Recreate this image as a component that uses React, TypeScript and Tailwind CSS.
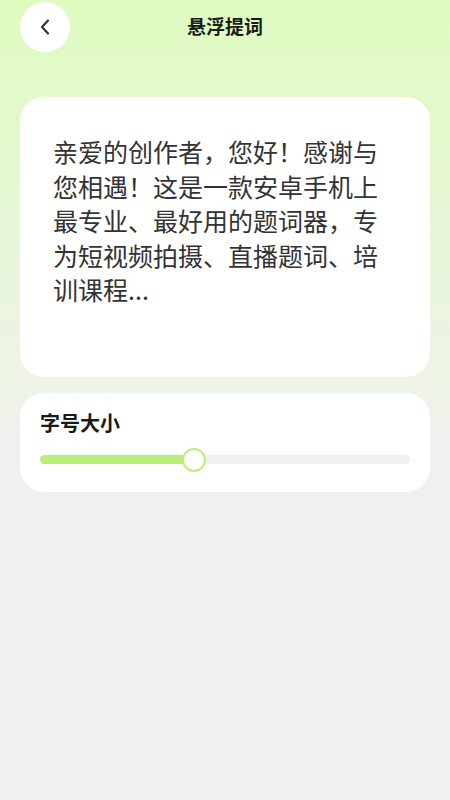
import React from "react";

export default function App() {
  const value = 0.415;
  return (
    <div
      className="w-[450px] h-[800px] bg-[linear-gradient(to_bottom,#dffbc0_0%,#eef3e8_50%,#f0f0f0_56%,#f0f0f0_100%)] flex flex-col"
      style={{ fontFamily: '"Noto Sans CJK SC", "Noto Sans", sans-serif' }}
    >
      <div className="relative h-[52px] pt-[1px] px-5 flex items-center">
        <button className="w-[50px] h-[50px] rounded-full bg-white flex items-center justify-center">
          <svg width="12" height="16" viewBox="0 0 12 16" fill="none">
            <path d="M9 1.5 L3 8 L9 14.5" stroke="#333" strokeWidth="2.2" strokeLinecap="round" strokeLinejoin="round" />
          </svg>
        </button>
        <div className="absolute left-0 right-0 top-[1px] h-[50px] flex items-center justify-center pointer-events-none">
          <span className="text-[19px] font-bold text-[#1a1a1a]">悬浮提词</span>
        </div>
      </div>

      <div className="mt-[45px] mx-5 h-[280px] rounded-[24px] bg-white px-[33px] pt-[37px]">
        <p className="text-[25px] leading-[34.5px] text-[#333333]">
          亲爱的创作者，您好！感谢与您相遇！这是一款安卓手机上最专业、最好用的题词器，专为短视频拍摄、直播题词、培训课程...
        </p>
      </div>

      <div className="mt-4 mx-5 h-[99px] rounded-[24px] bg-white px-5 pt-[16px]">
        <div className="text-[20px] leading-[28px] font-bold text-[#1a1a1a]">字号大小</div>
        <div className="relative mt-[18px] h-[9px] rounded-full bg-[#f0f0f0]">
          <div className="h-full rounded-full bg-[#b8f076]" style={{ width: `${value * 100}%` }} />
          <div
            className="absolute top-1/2 w-6 h-6 -translate-x-1/2 -translate-y-1/2 rounded-full bg-white border-[2.5px] border-[#b8f076]"
            style={{ left: `${value * 100}%` }}
          />
        </div>
      </div>
    </div>
  );
}
